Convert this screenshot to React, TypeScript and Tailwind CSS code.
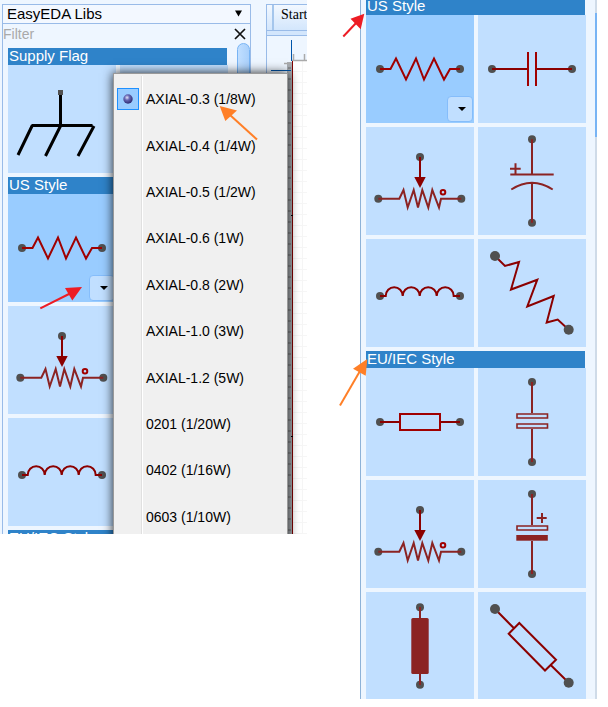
import { useState, type ReactNode } from "react";
import clsx from "clsx";

const DARK = "#8b0000";
const SOFT = "#8b2323";

function Pin({ x, y, r = 4 }: { x: number; y: number; r?: number }) {
  return <circle cx={x} cy={y} r={r} fill="#505050" />;
}

function Symbol({ children, color = DARK }: { children: ReactNode; color?: string }) {
  return (
    <svg viewBox="0 0 108 108" className="block size-full" fill="none" stroke={color} strokeWidth={2} aria-hidden="true">
      {children}
    </svg>
  );
}

function Dots({ points, r }: { points: number[][]; r?: number }) {
  return (
    <g stroke="none">
      {points.map(([x, y]) => (
        <Pin key={`${x}-${y}`} x={x} y={y} r={r} />
      ))}
    </g>
  );
}

const ChassisGround = () => (
  <Symbol color="#000000">
    <path strokeWidth={3} d="M52.5 28V60.5M24 60.5H84.5M24.5 60L10 90M53 60L37.5 91M86 61L70 91" />
    <rect x="50" y="25" width="5" height="5" fill="#505050" stroke="none" />
  </Symbol>
);

const Ground = () => (
  <Symbol color="#000000">
    <path strokeWidth={3} d="M54 30V60M34 60H74M41 68H67M48 76H60" />
  </Symbol>
);

const UsResistor = () => (
  <Symbol color="#a00000">
    <Dots points={[[14, 54], [94, 54]]} />
    <path d="M14 54H24.5L30 43.5L40 64.5L50 43.5L58 64.5L68 43.5L78 64.5L84 54H94" />
  </Symbol>
);

const UsCapacitor = () => (
  <Symbol color="#a00000">
    <Dots points={[[14, 54], [94, 54]]} />
    <path stroke={DARK} d="M14 54H50M58 54H94" />
    <path d="M50 37V71M58 37V71" />
  </Symbol>
);

const Potentiometer = () => (
  <Symbol color={SOFT}>
    <Dots points={[[54, 30], [12.3, 71.7], [95.3, 71.7]]} />
    <path d="M12.3 71.7H33.3L37.5 63L41.7 80.5L47.7 63L52 80.5L56.3 63L62.3 80.5L66.3 63L73 80.5L75 71.7H95.3" />
    <path stroke={DARK} d="M54 30V52" />
    <path fill={DARK} stroke="none" d="M48.3 50H59.7L54 61Z" />
    <circle cx="77" cy="65.3" r="2.3" stroke="#a00000" />
  </Symbol>
);

const PolarCapacitor = () => (
  <Symbol color={SOFT}>
    <Dots points={[[54, 12.3], [54, 95.7]]} />
    <path d="M54 12.3V47.5M32.3 47.5H75.7M54 56V95.7M33.3 62.5Q54 49 74.7 62.5M32 41.7H42.7M37.5 36.3V47" />
  </Symbol>
);

const Inductor = () => (
  <Symbol>
    <Dots points={[[14, 57], [94, 57]]} />
    <path d="M14 57H19.7A8.5 8.8 0 0 1 36.7 57A8.5 8.8 0 0 1 53.7 57A8.5 8.8 0 0 1 70.7 57A8.5 8.8 0 0 1 87.7 57H94" />
  </Symbol>
);

const DiagonalResistor = () => (
  <Symbol>
    <path d="M17 17L27 27L41 23L33 50.5L59.3 40.7L49.3 67.5L75.7 57L68.7 83.5L79.7 80.5L90.7 90.7" />
    <Dots points={[[17, 17], [90.7, 90.7]]} r={5} />
  </Symbol>
);

const EuResistor = () => (
  <Symbol color="#a00000">
    <Dots points={[[14, 54], [94, 54]]} />
    <path stroke={DARK} d="M14 54H34M74 54H94" />
    <rect x="34" y="46" width="40" height="16" />
  </Symbol>
);

const EuCapacitor = () => (
  <Symbol color={SOFT}>
    <Dots points={[[54, 14], [54, 94]]} />
    <path d="M54 14V45M54 61V94" />
    <path strokeWidth={1.6} d="M39 46H69.5V50H39ZM39 56H69.5V60H39Z" />
  </Symbol>
);

const EuPolarCapacitor = () => (
  <Symbol color={SOFT}>
    <Dots points={[[54, 14], [54, 94]]} />
    <path d="M54 14V45M54 61V94" />
    <path strokeWidth={1.6} d="M39 46H69.5V50H39Z" />
    <rect x="38.3" y="55" width="31.5" height="5.7" fill={SOFT} stroke="none" />
    <path d="M58.7 38H68.7M64 33V43" />
  </Symbol>
);

const FilledResistor = () => (
  <Symbol color={SOFT}>
    <Dots points={[[54, 15.3], [54, 92.7]]} />
    <path d="M54 15V93" />
    <rect x="45.3" y="26" width="17.4" height="56" rx="1.5" fill={SOFT} stroke="none" />
  </Symbol>
);

const DiagonalEuResistor = () => (
  <Symbol>
    <path d="M17 17L36 36.3M72.7 73L90.7 90.7M41.3 31L78 67.7L67 78.5L30.7 41.7Z" />
    <Dots points={[[17, 17], [90.7, 90.7]]} r={5} />
  </Symbol>
);

type Part = { name: string; symbol: ReactNode; packages?: boolean };
type Group = { title: string; parts: Part[] };

const SUPPLY: Group = {
  title: "Supply Flag",
  parts: [
    { name: "Chassis ground", symbol: <ChassisGround /> },
    { name: "Ground", symbol: <Ground /> },
  ],
};

const US: Group = {
  title: "US Style",
  parts: [
    { name: "Resistor", symbol: <UsResistor />, packages: true },
    { name: "Capacitor", symbol: <UsCapacitor /> },
    { name: "Potentiometer", symbol: <Potentiometer /> },
    { name: "Polarized capacitor", symbol: <PolarCapacitor /> },
    { name: "Inductor", symbol: <Inductor /> },
    { name: "Diagonal resistor", symbol: <DiagonalResistor /> },
  ],
};

const EU: Group = {
  title: "EU/IEC Style",
  parts: [
    { name: "Resistor", symbol: <EuResistor /> },
    { name: "Capacitor", symbol: <EuCapacitor /> },
    { name: "Potentiometer", symbol: <Potentiometer /> },
    { name: "Polarized capacitor", symbol: <EuPolarCapacitor /> },
    { name: "Filled resistor", symbol: <FilledResistor /> },
    { name: "Diagonal resistor", symbol: <DiagonalEuResistor /> },
  ],
};

const PACKAGES = [
  "AXIAL-0.3 (1/8W)",
  "AXIAL-0.4 (1/4W)",
  "AXIAL-0.5 (1/2W)",
  "AXIAL-0.6 (1W)",
  "AXIAL-0.8 (2W)",
  "AXIAL-1.0 (3W)",
  "AXIAL-1.2 (5W)",
  "0201 (1/20W)",
  "0402 (1/16W)",
  "0603 (1/10W)",
];

function PartCell({ part }: { part: Part }) {
  return (
    <div className={clsx("relative aspect-square", part.packages ? "bg-[#99ccff]" : "bg-[#c1dfff]")}>
      <button type="button" aria-label={part.name} className="block size-full">
        {part.symbol}
      </button>
      {part.packages && (
        <button
          type="button"
          aria-label="Choose package"
          className="absolute right-px bottom-px flex size-[26px] items-center justify-center rounded border border-[#85bdfb] bg-[#c1dfff]"
        >
          <svg viewBox="0 0 8 4" className="ml-1 h-1 w-2" aria-hidden="true">
            <path d="M0 0H8L4 4Z" fill="#000" />
          </svg>
        </button>
      )}
    </div>
  );
}

function PartGroups({ groups }: { groups: Group[] }) {
  return (
    <div className="flex min-w-0 flex-1 flex-col gap-1">
      {groups.map((group) => (
        <section key={group.title}>
          <h2 className="mr-px h-[17px] bg-[#2f83c9] pl-px text-[15px] leading-4 text-white">{group.title}</h2>
          <div className="grid grid-cols-2 gap-1">
            {group.parts.map((part) => (
              <PartCell key={part.name} part={part} />
            ))}
          </div>
        </section>
      ))}
    </div>
  );
}

function PackageMenu() {
  const [selected, setSelected] = useState(PACKAGES[0]);
  return (
    <div
      role="menu"
      className="absolute top-[73px] left-[113px] h-[472px] w-[175px] border border-[#999999] bg-[#f0f0f0] pt-[2px] shadow-[0_0_10px_rgba(0,0,0,0.85)]"
    >
      <div className="grid h-[464px] auto-rows-fr">
        {PACKAGES.map((name) => (
          <button
            key={name}
            type="button"
            role="menuitemradio"
            aria-checked={name === selected}
            onClick={() => setSelected(name)}
            className="flex text-left text-sm text-black"
          >
            <span className="flex w-7 items-center self-stretch border-r border-[#e0e0e0] pl-[3px]">
              {name === selected && (
                <span className="flex size-[22px] items-center justify-center border border-[#1e90ff] bg-[#99ccff]">
                  <svg viewBox="0 0 10 10" className="size-[10px]" aria-hidden="true">
                    <defs>
                      <radialGradient id="ball" cx="0.4" cy="0.35" r="0.6">
                        <stop offset="0" stopColor="#e4e4f8" />
                        <stop offset="0.45" stopColor="#6868b4" />
                        <stop offset="1" stopColor="#34347c" />
                      </radialGradient>
                    </defs>
                    <circle cx="5" cy="5" r="4.7" fill="url(#ball)" />
                  </svg>
                </span>
              )}
            </span>
            <span className="flex items-center self-stretch border-l border-white pl-[3px]">{name}</span>
          </button>
        ))}
      </div>
    </div>
  );
}

function Arrow({ color, head, from, to }: { color: string; head: string; from: number[]; to: number[] }) {
  return (
    <g>
      <line x1={from[0]} y1={from[1]} x2={to[0]} y2={to[1]} stroke={color} strokeWidth={2} />
      <polygon points={head} fill={color} />
    </g>
  );
}

function EditorPane() {
  return (
    <div className="flex min-w-0 flex-1 flex-col overflow-hidden border-t border-l border-[#99bbe8] bg-[#eef6ff]">
      <div className="flex h-[26px] border-b border-[#99bbe8] bg-linear-to-b from-[#f2f8ff] to-[#d3e6fc]">
        <button
          type="button"
          className="ml-[5px] flex items-start border-l-2 border-[#a5c6ec] pl-[7px] font-['Liberation_Serif',serif] text-sm text-black"
        >
          Start
        </button>
      </div>
      <div className="h-[5px] border-b border-[#99bbe8] bg-[#d3e6fc]" />
      <svg className="w-full flex-1" aria-hidden="true">
        <defs>
          <pattern id="grid" x="25" y="25" width="11" height="11" patternUnits="userSpaceOnUse">
            <path d="M0 10.5H11M10.5 0V11" stroke="#f6f6f6" />
          </pattern>
          <pattern id="ticks" x="21" y="30" width="4" height="11" patternUnits="userSpaceOnUse">
            <path d="M0 2H4" stroke="#6d6d6d" />
          </pattern>
        </defs>
        <rect x="20" y="26" width="5" height="500" fill="#a8adb2" />
        <rect x="21" y="30" width="3" height="500" fill="url(#ticks)" />
        <rect x="25" y="25" width="60" height="500" fill="#fff" />
        <rect x="25" y="25" width="60" height="500" fill="url(#grid)" />
        <path d="M25 24.5H80M26.5 18V24M37.5 18V24M17 27.5H24" stroke="#aaaaaa" strokeWidth={1.5} />
        <path d="M24.5 4V25M4 34.5H24" stroke="#0055aa" />
        <path d="M25.5 25V520" stroke="#800000" />
        <path d="M24 179.5H26M24 400.5H26" stroke="#000" />
      </svg>
    </div>
  );
}

function LibraryPanel() {
  return (
    <aside className="flex w-[249px] shrink-0 flex-col border-x border-[#99bbe8]">
      <select
        aria-label="Library"
        className="h-5 w-full shrink-0 appearance-none border-y border-[#99bbe8] bg-[#f3f8ff] pl-1 text-[15px] leading-[18px] text-black"
      >
        <option>EasyEDA Libs</option>
      </select>
      <div className="flex h-[19px] shrink-0 items-center">
        <input
          aria-label="Filter"
          placeholder="Filter"
          className="h-full min-w-0 flex-1 bg-transparent text-sm text-black placeholder:text-[#a9a9a9]"
        />
        <button type="button" aria-label="Clear filter" className="mr-1 size-3">
          <svg viewBox="0 0 12 12" className="size-3" stroke="#111" strokeWidth={1.7} aria-hidden="true">
            <path d="M1 1L11 11M11 1L1 11" />
          </svg>
        </button>
      </div>
      <div className="flex min-h-0 flex-1 gap-[9px] pl-[5px]">
        <div className="flex min-w-0 flex-1 pt-[5px]">
          <PartGroups groups={[SUPPLY, US, EU]} />
        </div>
        <div className="h-48 w-[13px] rounded-full border border-[#78b4f4] bg-linear-to-r from-[#c1dfff] to-[#a9d0fb]" />
      </div>
    </aside>
  );
}

export default function App() {
  return (
    <main className="flex items-start gap-[53px] bg-white pr-[11px] font-['Liberation_Sans',Arial,sans-serif]">
      <div className="relative flex h-[534px] min-w-0 flex-1 gap-[15px] overflow-hidden bg-[#eef6ff] pt-1 pl-[2px]">
        <LibraryPanel />
        <EditorPane />
        <svg viewBox="0 0 8 7" className="pointer-events-none absolute top-[10px] left-[235px] h-[7px] w-[7px]" aria-hidden="true">
          <path d="M0 0H8L4 7Z" fill="#000" />
        </svg>
        <PackageMenu />
        <svg className="pointer-events-none absolute inset-0 size-full" aria-hidden="true">
          <Arrow color="#ff7f27" head="219.7,106 237,110.5 225.3,121" from={[257, 139.5]} to={[230, 115]} />
          <Arrow color="#ed1c24" head="82,287 65,288 72.3,300.5" from={[40.3, 308.3]} to={[70, 293.5]} />
        </svg>
      </div>

      <div className="relative w-[237px] shrink-0">
        <div className="flex h-[699px] overflow-hidden border-l border-[#8db2d8] bg-[#eef6ff] pl-[5px]">
          <div className="-mt-[2px] mr-[9px] flex min-w-0 flex-1">
            <PartGroups groups={[US, EU]} />
          </div>
          <div className="w-[2px] bg-[#cfdbe8] pt-[13px]">
            <div className="h-[124px] bg-[#78b4f4]" />
          </div>
        </div>
        <svg className="pointer-events-none absolute inset-0 size-full overflow-visible" aria-hidden="true">
          <Arrow color="#ed1c24" head="4.3,13.7 -9.5,18.7 0.7,29.3" from={[-16.7, 36.5]} to={[-3, 22]} />
          <Arrow color="#ff7f27" head="7.3,359 -7,368.7 5.7,375.7" from={[-20, 405.5]} to={[0, 371]} />
        </svg>
      </div>
    </main>
  );
}
